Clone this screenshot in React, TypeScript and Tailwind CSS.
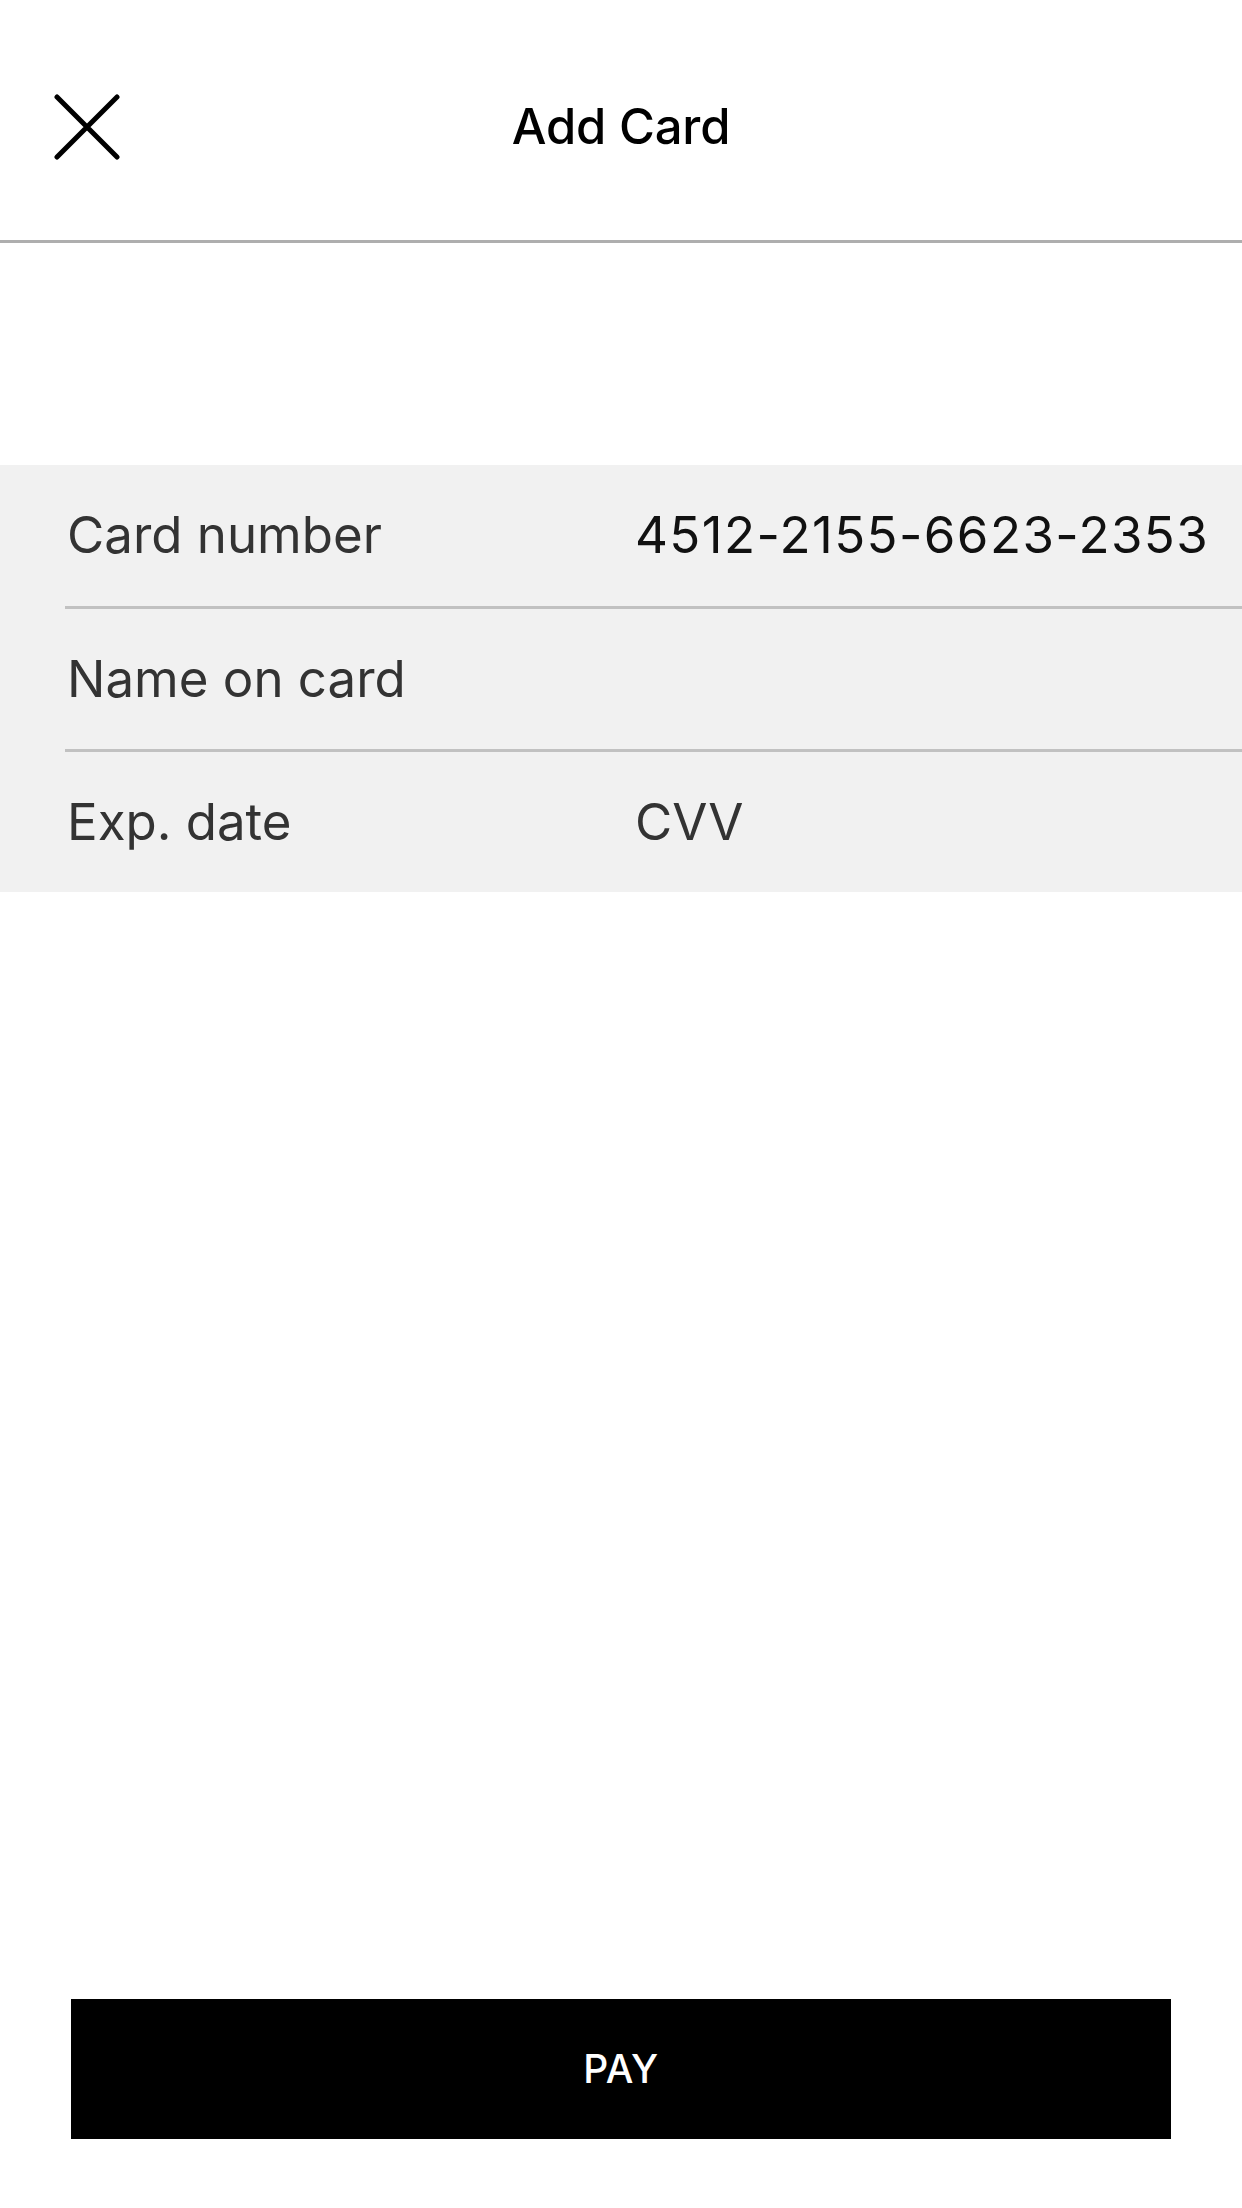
import React from 'react';

// 表單列
interface FieldRow {
  label: string;
  value?: string;
  second?: string;
  height: string;
  divider: boolean;
}

const rows: FieldRow[] = [
  { label: 'Card number', value: '4512-2155-6623-2353', height: 'h-[144px]', divider: true },
  { label: 'Name on card', height: 'h-[143px]', divider: true },
  { label: 'Exp. date', second: 'CVV', height: 'h-[140px]', divider: false },
];

// 關閉圖示
function CloseIcon() {
  return (
    <svg width="66" height="66" viewBox="0 0 66 66" fill="none">
      <path d="M3 3L63 63M63 3L3 63" stroke="#000" strokeWidth="5" strokeLinecap="round" />
    </svg>
  );
}

export default function App() {
  return (
    <div
      className="w-[1242px] min-h-[2208px] flex flex-col bg-white"
      style={{ fontFamily: 'Inter, "Noto Sans", "Liberation Sans", sans-serif' }}
    >
      {/* 頂部標題列 */}
      <div className="h-[243px] grid grid-cols-[1fr_auto_1fr] items-center pt-[13px] border-b-[3px] border-[#aeaeae]">
        <div className="pl-[54px] flex items-center">
          <CloseIcon />
        </div>
        <h1 className="text-[49px] font-medium text-black tracking-[-0.2px]">Add Card</h1>
        <div />
      </div>

      {/* 卡片資料 */}
      <div className="mt-[222px] bg-[#f1f1f1]">
        {rows.map((row) => (
          <div key={row.label} className="pl-[65px]">
            <div
              className={`${row.height} grid grid-cols-[568px_1fr] items-center pl-[2px] ${
                row.divider ? 'border-b-[3px] border-[#c1c1c1]' : ''
              }`}
            >
              <span className="text-[51px] text-[#333333]">{row.label}</span>
              {row.value && (
                <span className="text-[51px] text-[#111111] tracking-[1.4px]">{row.value}</span>
              )}
              {row.second && <span className="text-[51px] text-[#333333]">{row.second}</span>}
            </div>
          </div>
        ))}
      </div>

      <div className="flex-1" />

      {/* 付款按鈕 */}
      <div className="px-[71px] pb-[69px]">
        <button className="w-full h-[140px] bg-black text-white text-[39px] font-medium tracking-[0.5px] flex items-center justify-center">
          PAY
        </button>
      </div>
    </div>
  );
}
